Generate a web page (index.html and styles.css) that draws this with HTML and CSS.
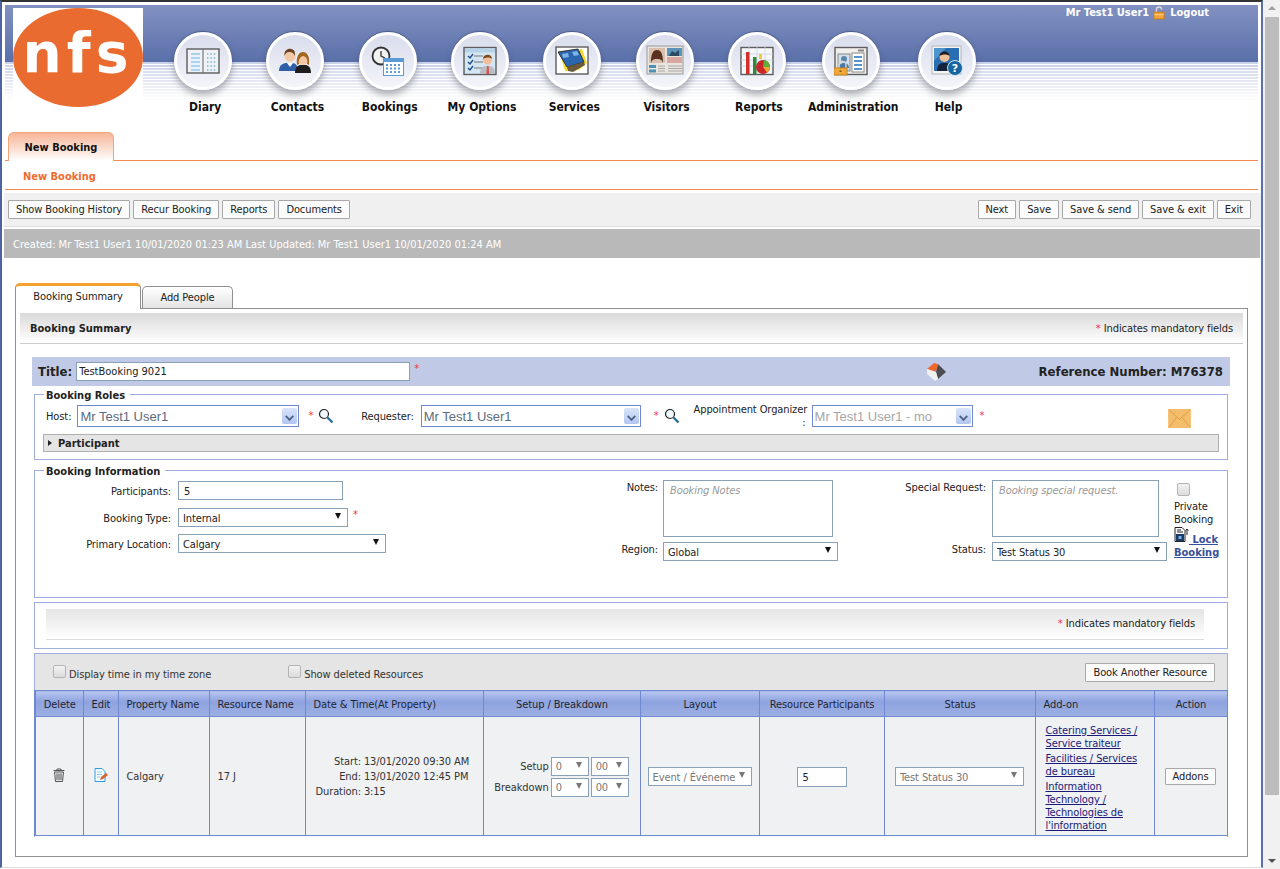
FILE: index.html
```html
<!DOCTYPE html>
<html lang="en">
<head>
    <meta charset="UTF-8">
    <title>New Booking</title>
    <link rel="stylesheet" href="styles.css">
</head>
<body>
<div class="window">
<div class="frame">

    <header class="banner">
        <div class="logo"><div class="logo-oval">nfs</div></div>
        <div class="banner-right">
            <div class="user-bar">
                <span>Mr Test1 User1</span>
                <svg class="lock-icon" width="12" height="14" viewBox="0 0 14 16"><path d="M4 8V4a3 3 0 0 1 6 0" fill="none" stroke="#d9d9d9" stroke-width="1.6"/><rect x="1" y="7" width="12" height="8" fill="#f2a33a" stroke="#c9781a"/><rect x="1.5" y="9.500" width="11" height="1" fill="#ffd38a"/></svg>
                <a href="#">Logout</a>
            </div>
            <nav class="main-nav">
                <a class="nav-item" href="#">
                    <span class="nav-circle">
                        <svg width="34" height="30" viewBox="0 0 34 30"><rect x="1" y="3" width="32" height="24" fill="#eef2f6" stroke="#5c5c5c" stroke-width="1.4"/><rect x="16.4" y="3" width="1.2" height="24" fill="#777"/><path d="M5 8h9M5 12h9M5 16h9M5 20h9M5 24h9" stroke="#63b5e6" stroke-width="1"/><path d="M21 8h9M21 12h9M21 16h9M21 20h9M21 24h9" stroke="#3f8fc4" stroke-width="1.2" stroke-dasharray="1.4 2"/></svg>
                    </span>
                    <span class="nav-label">Diary</span>
                </a>
                <a class="nav-item" href="#">
                    <span class="nav-circle">
                        <svg width="34" height="30" viewBox="0 0 34 30"><path d="M1 25c0-6 4-8 8-8h5c4 0 6 3 6 8z" fill="#2f5fa8"/><path d="M9 17l3 4 3-4z" fill="#fff"/><circle cx="12" cy="10" r="5.5" fill="#f3c9a5"/><path d="M6.500 10c-1-6 4-8 7-7s4 3 3 7c-1-3-2-4-5-4s-4 1-5 4z" fill="#6b4320"/><path d="M17 27c0-6 3-8 6-8h4c3 0 6 2 6 8z" fill="#1d1d1d"/><circle cx="25" cy="14" r="5" fill="#f3c9a5"/><path d="M19 19c-1-9 2-13 6-13s7 4 6 13l-2-1c1-4 0-7-4-8-3 1-5 4-4 8z" fill="#a3661d"/></svg>
                    </span>
                    <span class="nav-label">Contacts</span>
                </a>
                <a class="nav-item" href="#">
                    <span class="nav-circle">
                        <svg width="34" height="30" viewBox="0 0 34 30"><circle cx="10" cy="10" r="8.500" fill="#f2f2f2" stroke="#333" stroke-width="1.800"/><path d="M10 5v5l4 2" fill="none" stroke="#333" stroke-width="1.300"/><rect x="12.500" y="12.500" width="20" height="17" fill="#fff" stroke="#5b9bd5"/><rect x="12.500" y="12.500" width="20" height="3.500" fill="#5b9bd5"/><path d="M15 19h16M15 22.500h16M15 26h16" stroke="#5b9bd5" stroke-width="2" stroke-dasharray="2 2"/></svg>
                    </span>
                    <span class="nav-label">Bookings</span>
                </a>
                <a class="nav-item" href="#">
                    <span class="nav-circle">
                        <svg width="34" height="30" viewBox="0 0 34 30"><rect x="1" y="1.500" width="32" height="27" fill="#d5e6f3" stroke="#5c5c5c" stroke-width="1.400"/><rect x="2" y="2.500" width="30" height="4" fill="#b7d3e8"/><path d="M11 10h9M11 16h9M11 22h9" stroke="#777"/><path d="M5 10l2 2 3-4M5 16l2 2 3-4M5 22l2 2 3-4" fill="none" stroke="#1f4f8a" stroke-width="1.400"/><path d="M17 28c0-6 3-8 6-8h3c3 0 6 2 6 8z" fill="#b9bcc2"/><path d="M24 20h1.600l.6 8h-2.800z" fill="#d9524f"/><circle cx="24.500" cy="14" r="4.500" fill="#f1c09a"/><path d="M20 13c0-5 9-6 9 0-2-2-6-2-9 0z" fill="#7a4a20"/></svg>
                    </span>
                    <span class="nav-label">My Options</span>
                </a>
                <a class="nav-item" href="#">
                    <span class="nav-circle">
                        <svg width="34" height="30" viewBox="0 0 34 30"><rect x="1" y="1" width="32" height="27" fill="#fff" stroke="#5c5c5c" stroke-width="1.400"/><path d="M5 8l22-5 5 14-8 7-14 1z" fill="#f2da2e"/><path d="M3 6l20-3 6 13-17 5z" fill="#2a66b0" stroke="#333"/><path d="M7 8l6-1 1 4-6 1zM17 6l5-1 2 4-5 1z" fill="#7fb2e6"/><path d="M12 21l17-5 1 3-12 7-5-1z" fill="#6a5a3c"/></svg>
                    </span>
                    <span class="nav-label">Services</span>
                </a>
                <a class="nav-item" href="#">
                    <span class="nav-circle">
                        <svg width="38" height="32" viewBox="0 0 38 32"><rect x="1" y="1" width="36" height="28" fill="#e9e5de" stroke="#999"/><rect x="3" y="3" width="16" height="15" fill="#d8bfae"/><circle cx="11" cy="9" r="3.500" fill="#d7a27f"/><path d="M5 18c0-7 1-13 6-13s6 6 6 13c-1-3-2-4-6-4s-5 1-6 4z" fill="#5a3020"/><rect x="21" y="3" width="15" height="8" fill="#5c93b8"/><path d="M23 11l3-5 3 2 4-3v6z" fill="#2c4a5f"/><rect x="21" y="12" width="15" height="6" fill="#d8a8a0"/><rect x="3" y="20" width="7" height="3" fill="#4e93b5"/><rect x="3" y="24.500" width="7" height="3" fill="#4e93b5"/><path d="M12 21h7M12 23.500h7M12 26h7M22 21h14M22 23.500h14M22 26h14" stroke="#a8a8a8"/></svg>
                    </span>
                    <span class="nav-label">Visitors</span>
                </a>
                <a class="nav-item" href="#">
                    <span class="nav-circle">
                        <svg width="34" height="30" viewBox="0 0 34 30"><rect x="1" y="1.500" width="32" height="27" fill="#f6f7f9" stroke="#5c5c5c" stroke-width="1.400"/><path d="M1 8h32M1 14h32M1 20h32M9 1v27M17 1v27M25 1v27" stroke="#c9d3e0" stroke-width=".8"/><rect x="6" y="6" width="3.500" height="22" fill="#d3302b"/><rect x="13" y="11" width="3.500" height="17" fill="#2c8a3c"/><circle cx="23" cy="21" r="7" fill="#c9252b"/><path d="M23 21l1-7a7 7 0 0 1 6 7z" fill="#5fae3a"/><path d="M23 21h7a7 7 0 0 1-3 5.500z" fill="#f0a52c"/><rect x="19" y="8" width="3" height="5" fill="#f2c53a"/></svg>
                    </span>
                    <span class="nav-label">Reports</span>
                </a>
                <a class="nav-item nav-admin" href="#">
                    <span class="nav-circle">
                        <svg width="34" height="30" viewBox="0 0 34 30"><rect x="1" y="1.500" width="32" height="27" fill="#f0efec" stroke="#5c5c5c" stroke-width="1.400"/><rect x="24" y="3.500" width="6" height="2" fill="#888"/><rect x="4" y="8" width="12" height="17" fill="#cfe0ee" stroke="#888"/><circle cx="10" cy="13" r="3" fill="#5b87ad"/><path d="M5 22c0-4 3-5 5-5s5 1 5 5z" fill="#4a7aa3"/><rect x="18" y="7" width="12" height="19" fill="#fff" stroke="#888"/><path d="M20 11h8M20 15h8M20 19h8M20 23h8" stroke="#1f72bd" stroke-width="1.300"/><path d="M5 22v-3a3.500 3.500 0 0 1 7 0v3" fill="none" stroke="#d8d8d8" stroke-width="1.400"/><rect x="0" y="22" width="13" height="7" fill="#f0a83a" stroke="#c9821f"/><rect x="5.500" y="24.500" width="2" height="1.500" fill="#8a5510"/></svg>
                    </span>
                    <span class="nav-label">Administration</span>
                </a>
                <a class="nav-item nav-help" href="#">
                    <span class="nav-circle">
                        <svg width="34" height="32" viewBox="0 0 34 32"><rect x="2" y="1" width="29" height="28" fill="#f5f5f5" stroke="#b5b5b5"/><rect x="4" y="3" width="25" height="23" fill="#2a6fb3"/><path d="M4 3h12L4 16z" fill="#4f94cf"/><path d="M7 26c0-6 3-8 6-8h3c3 0 5 2 6 8z" fill="#15243a"/><circle cx="14.500" cy="12" r="5" fill="#eec19a"/><path d="M9.500 11c0-6 10-6 10 0-2-2-7-2-10 0z" fill="#1e1e1e"/><circle cx="25" cy="23" r="7.500" fill="#17659e" stroke="#cfe4f2"/><text class="help-mark" x="25" y="27">?</text></svg>
                    </span>
                    <span class="nav-label">Help</span>
                </a>
            </nav>
        </div>
    </header>

    <div class="page-tabs"><a class="page-tab" href="#">New Booking</a></div>
    <div class="page-title">New Booking</div>

    <div class="toolbar">
        <div class="btn-group">
            <button class="btn">Show Booking History</button>
            <button class="btn">Recur Booking</button>
            <button class="btn">Reports</button>
            <button class="btn">Documents</button>
        </div>
        <div class="btn-group">
            <button class="btn">Next</button>
            <button class="btn">Save</button>
            <button class="btn">Save &amp; send</button>
            <button class="btn">Save &amp; exit</button>
            <button class="btn">Exit</button>
        </div>
    </div>
    <div class="audit-bar">Created: Mr Test1 User1 10/01/2020 01:23 AM Last Updated: Mr Test1 User1 10/01/2020 01:24 AM</div>

    <div class="form-tabs">
        <a class="form-tab active" href="#">Booking Summary</a>
        <a class="form-tab" href="#">Add People</a>
    </div>

    <section class="panel">
        <div class="panel-head">
            <strong>Booking Summary</strong>
            <span><span class="req">*</span> Indicates mandatory fields</span>
        </div>

        <div class="panel-body">
            <div class="title-bar">
                <label class="title-label">Title:</label>
                <input class="title-input" type="text" value="TestBooking 9021">
                <span class="req title-req">*</span>
                <svg class="cube-icon" width="22" height="22" viewBox="0 0 22 22"><path d="M11 11L2 8l7-6 4 1z" fill="#f0682c"/><path d="M13 3l8 8-8 7-2-7z" fill="#4a4c52"/><path d="M2 8l9 3 2 7-3 2-8-7z" fill="#f1f1f1"/></svg>
                <span class="ref-number">Reference Number: M76378</span>
            </div>

            <fieldset class="group roles">
                <legend>Booking Roles</legend>
                <div class="roles-row">
                    <label class="roles-host">Host:</label>
                    <div class="combo combo-host"><input type="text" value="Mr Test1 User1"><span class="combo-btn"></span></div>
                    <span class="req req-host">*</span>
                    <svg class="search-icon" width="16" height="16" viewBox="0 0 16 16"><circle cx="6" cy="6" r="4.500" fill="#eef7fb" stroke="#222" stroke-width="1.200"/><path d="M9.500 9.500l5 5" stroke="#2a6f96" stroke-width="2.400"/></svg>
                    <label class="roles-requester">Requester:</label>
                    <div class="combo combo-req"><input type="text" value="Mr Test1 User1"><span class="combo-btn"></span></div>
                    <span class="req req-second">*</span>
                    <svg class="search-icon" width="16" height="16" viewBox="0 0 16 16"><circle cx="6" cy="6" r="4.500" fill="#eef7fb" stroke="#222" stroke-width="1.200"/><path d="M9.500 9.500l5 5" stroke="#2a6f96" stroke-width="2.400"/></svg>
                    <label class="roles-organizer">Appointment Organizer<br>:</label>
                    <div class="combo combo-org"><input class="muted" type="text" value="Mr Test1 User1 - mo"><span class="combo-btn"></span></div>
                    <span class="req req-org">*</span>
                    <svg class="mail-icon" width="23" height="19" viewBox="0 0 24 20"><rect width="24" height="20" fill="#f4bd6b"/><path d="M1 1l11 10L23 1M1 19l8-10M23 19l-8-10" fill="none" stroke="#dc9c45"/></svg>
                </div>
                <div class="participant-bar"><span class="caret"></span><strong>Participant</strong></div>
            </fieldset>

            <fieldset class="group info">
                <legend>Booking Information</legend>
                <div class="info-grid">
                    <div class="info-col col-main">
                        <div class="field"><label>Participants:</label><input class="text-box box-participants" type="text" value="5"></div>
                        <div class="field field-type"><label>Booking Type:</label><span class="sel sel-type"><select><option>Internal</option></select></span><span class="req">*</span></div>
                        <div class="field"><label>Primary Location:</label><span class="sel sel-location"><select><option>Calgary</option></select></span></div>
                    </div>
                    <div class="info-col col-notes">
                        <div class="field"><label>Notes:</label><textarea class="note-box" placeholder="Booking Notes"></textarea></div>
                        <div class="field"><label>Region:</label><span class="sel sel-region"><select><option>Global</option></select></span></div>
                    </div>
                    <div class="info-col col-special">
                        <div class="field"><label>Special Request:</label><textarea class="note-box note-special" placeholder="Booking special request."></textarea></div>
                        <div class="field"><label>Status:</label><span class="sel sel-status"><select><option>Test Status 30</option></select></span></div>
                    </div>
                    <div class="info-col col-private">
                        <span class="check check-private"></span>
                        <div class="private-label">Private Booking</div>
                        <a class="lock-link" href="#"><svg width="15" height="15" viewBox="0 0 15 15"><path d="M1 .500h7l3 3v11H1z" fill="#fff" stroke="#222"/><path d="M3 3h4M3 5h6" stroke="#222"/><rect x="2" y="7" width="8" height="7" fill="#1c3a66"/><rect x="4.500" y="9" width="3" height="3" fill="#6fb6e8"/><path d="M13 8V2m-1.500 1.500L13 2l1.500 1.500" fill="none" stroke="#222"/></svg> Lock Booking</a>
                    </div>
                </div>
            </fieldset>

            <div class="group-box mandatory-box">
                <div class="mandatory-inner"><span class="req">*</span> Indicates mandatory fields</div>
            </div>

            <div class="group-box resource-box">
                <div class="resource-tools">
                    <label class="check-label label-zone"><span class="check"></span>Display time in my time zone</label>
                    <label class="check-label"><span class="check"></span>Show deleted Resources</label>
                    <button class="btn btn-book">Book Another Resource</button>
                </div>
                <table class="resource-table">
                    <colgroup>
                        <col class="c-delete"><col class="c-edit"><col class="c-property"><col class="c-resource"><col class="c-date"><col class="c-setup"><col class="c-layout"><col class="c-people"><col class="c-status"><col class="c-addon"><col class="c-action">
                    </colgroup>
                    <thead>
                        <tr>
                            <th>Delete</th><th>Edit</th><th class="left">Property Name</th><th class="left">Resource Name</th><th class="left">Date &amp; Time(At Property)</th><th>Setup / Breakdown</th><th>Layout</th><th>Resource Participants</th><th>Status</th><th class="left">Add-on</th><th>Action</th>
                        </tr>
                    </thead>
                    <tbody>
                        <tr>
                            <td class="center"><svg width="14" height="14" viewBox="0 0 14 14"><path d="M1.500 2.500h11M5 2.500V1h4v1.500" fill="none" stroke="#555"/><path d="M2.500 4h9l-1 9.500h-7z" fill="#e8e8e8" stroke="#555"/><path d="M5 5.500v6.500M7 5.500v6.500M9 5.500v6.500" stroke="#555"/></svg></td>
                            <td class="center"><svg width="14" height="14" viewBox="0 0 14 14"><path d="M1 .500h7l3 3v10H1z" fill="#f4fbff" stroke="#2f9fe0"/><path d="M3 4h5M3 6.500h5M3 9h3" stroke="#8ccbef"/><path d="M6 12l1-3 5-4 2 2-5 4z" fill="#d9662c"/></svg></td>
                            <td class="pad">Calgary</td>
                            <td class="pad">17 J</td>
                            <td>
                                <div class="date-grid">
                                    <span>Start:</span><span>13/01/2020 09:30 AM</span>
                                    <span>End:</span><span>13/01/2020 12:45 PM</span>
                                    <span>Duration:</span><span>3:15</span>
                                </div>
                            </td>
                            <td>
                                <div class="setup-grid">
                                    <span>Setup</span><span class="sel sel-time"><select><option>0</option></select></span><span class="sel sel-time"><select><option>00</option></select></span>
                                    <span>Breakdown</span><span class="sel sel-time"><select><option>0</option></select></span><span class="sel sel-time"><select><option>00</option></select></span>
                                </div>
                            </td>
                            <td class="center"><span class="sel sel-layout"><select><option>Event / Événement</option></select></span></td>
                            <td class="center"><input class="text-box box-people" type="text" value="5"></td>
                            <td class="center"><span class="sel sel-row-status"><select><option>Test Status 30</option></select></span></td>
                            <td class="addons">
                                <a href="#">Catering Services / Service traiteur</a>
                                <a href="#">Facilities / Services de bureau</a>
                                <a href="#">Information Technology / Technologies de l'information</a>
                            </td>
                            <td class="center"><button class="btn btn-addons">Addons</button></td>
                        </tr>
                    </tbody>
                </table>
            </div>
        </div>
    </section>

</div>
<div class="scrollbar">
    <span class="arrow-up"></span>
    <div class="thumb"></div>
    <span class="arrow-down"></span>
</div>
</div>
</body>
</html>
```

FILE: styles.css
```css
* {
    box-sizing: border-box;
}
html, body {
    margin: 0;
    height: 100%;
    overflow: hidden;
}
body {
    background-color: #FFFFFF;
    color: #222222;
    font-family: "DejaVu Sans Condensed", "Liberation Sans", sans-serif;
    font-size: 11px;
    letter-spacing: -0.1px;
}
a {
    color: inherit;
}
button, input, select, textarea {
    font-family: inherit;
    font-size: inherit;
    letter-spacing: inherit;
}
.window {
    display: flex;
    height: 869px;
}
.frame {
    width: 1263px;
    height: 868px;
    border-top: 2px solid #333333;
    border-left: 2px solid #4D64A4;
    border-right: 2px solid #5A70AA;
    border-bottom: 1px solid #DDDDDD;
    padding-top: 3px;
    overflow: hidden;
    flex: none;
}

/* banner */
.banner {
    display: flex;
    height: 127px;
    margin: 0 3px;
    background:
        linear-gradient(#8291C1, #5A70AA) top / 100% 57px no-repeat,
        linear-gradient(rgba(255,255,255,0.1), #FFFFFF) 0 57px / 100% 38px no-repeat,
        repeating-linear-gradient(#C3CCE5 0 2px, #FFFFFF 2px 3px) 0 57px / 100% 38px no-repeat;
}
.logo {
    width: 130px;
    height: 99px;
    margin: 3px 0 0 8px;
    background: linear-gradient(#FFFFFF 90%, transparent);
    flex: none;
}
.logo-oval {
    width: 130px;
    height: 99px;
    border-radius: 50%;
    background-color: #E96B30;
    color: #FFFFFF;
    font-family: "DejaVu Sans", sans-serif;
    font-size: 55px;
    font-weight: bold;
    letter-spacing: 5px;
    line-height: 90px;
    text-align: center;
}
.banner-right {
    flex: 1;
}
.user-bar {
    display: flex;
    justify-content: flex-end;
    align-items: center;
    gap: 4px;
    height: 27px;
    padding: 0 49px 12px 0;
    color: #FFFFFF;
    font-weight: bold;
    letter-spacing: 0;
}
.user-bar a {
    margin-left: 1px;
    text-decoration: none;
}
.main-nav {
    display: flex;
    margin-left: 14px;
}
.nav-item {
    display: flex;
    flex-direction: column;
    align-items: center;
    width: 92.3px;
    flex: none;
    text-decoration: none;
    color: #111111;
}
.nav-admin {
    margin-left: 2px;
}
.nav-help {
    margin-left: 3px;
}
.nav-circle {
    display: flex;
    align-items: center;
    justify-content: center;
    width: 58px;
    height: 58px;
    border-radius: 50%;
    border: 3px solid #FFFFFF;
    background: linear-gradient(#D9DDEC, #F4F5FA);
    box-shadow: 0 -1px 1px #4D5B85, 0 5px 7px rgba(60,60,70,0.4);
}
.nav-label {
    margin-top: 9px;
    padding-left: 4px;
    font-size: 12px;
    font-weight: bold;
    letter-spacing: 0;
    line-height: 16px;
    white-space: nowrap;
}
.help-mark {
    fill: #FFFFFF;
    font-family: "DejaVu Sans", sans-serif;
    font-size: 11px;
    font-weight: bold;
    text-anchor: middle;
}

/* page tabs */
.page-tabs {
    display: flex;
    height: 29px;
    margin: 0 3px;
    padding-left: 3px;
    border-bottom: 1px solid #F58A55;
}
.page-tab {
    width: 106px;
    height: 29px;
    border: 1px solid #F3A37C;
    border-bottom: none;
    border-radius: 6px 6px 0 0;
    background: linear-gradient(#F7B597, #FFFFFF);
    font-weight: bold;
    letter-spacing: 0;
    line-height: 29px;
    text-align: center;
    text-decoration: none;
    color: #111111;
}
.page-title {
    height: 29px;
    margin: 0 3px;
    padding: 1px 0 0 18px;
    border-bottom: 1px solid #F58A55;
    color: #F26A2E;
    font-weight: bold;
    letter-spacing: 0;
    line-height: 30px;
}
.toolbar {
    display: flex;
    justify-content: space-between;
    height: 34px;
    margin: 3px 0 0 2px;
    padding: 7px 10px 0 4px;
    background-color: #F0F0F0;
    border-bottom: 1px solid #DDDDDD;
}
.btn-group {
    display: flex;
    gap: 3px;
}
.btn {
    height: 19px;
    padding: 1px 7px 0;
    border: 1px solid #A8A8A8;
    border-radius: 1px;
    background-color: #FBFBFB;
    color: #222222;
    line-height: 16px;
    white-space: nowrap;
}
.audit-bar {
    height: 29px;
    margin: 2px 1px 0 2px;
    padding-left: 9px;
    background-color: #B9B9B9;
    color: #FFFFFF;
    letter-spacing: 0;
    line-height: 31px;
}

/* form tabs */
.form-tabs {
    display: flex;
    align-items: flex-end;
    gap: 1px;
    height: 25px;
    margin: 25px 0 0 13px;
}
.form-tab {
    width: 91px;
    height: 22px;
    border: 1px solid #8F8F8F;
    border-bottom: none;
    border-radius: 5px 5px 0 0;
    background: linear-gradient(#FFFFFF, #E4E4E4);
    line-height: 21px;
    text-align: center;
    text-decoration: none;
    color: #222222;
}
.form-tab.active {
    width: 126px;
    height: 26px;
    margin-bottom: -1px;
    position: relative;
    border-top: 3px solid #F5A12E;
    background: #FFFFFF;
}
.panel {
    height: 549px;
    width: 1233px;
    margin-left: 13px;
    padding: 4px;
    border: 1px solid #8F8F8F;
}
.panel-head {
    display: flex;
    justify-content: space-between;
    align-items: center;
    height: 31px;
    padding: 0 10px;
    background: linear-gradient(#DADADA, #FFFFFF);
    border-bottom: 1px solid #CCCCCC;
}
.panel-head strong {
    letter-spacing: 0;
}
.req {
    color: #F0353A;
}
.panel-body {
    padding: 13px 13px 0 12px;
}
.title-bar {
    display: flex;
    align-items: center;
    height: 29px;
    width: 1198px;
    padding: 0 7px 0 6px;
    background-color: #C0CAE6;
    font-size: 13px;
    font-weight: bold;
    letter-spacing: 0;
}
.title-input {
    width: 334px;
    height: 19px;
    margin-left: 4px;
    padding: 0 2px;
    border: 1px solid #88A0B8;
    font-size: 11px;
    font-weight: normal;
    color: #222222;
}
.title-req {
    margin: -6px 0 0 4px;
    font-size: 11px;
    font-weight: normal;
}
.cube-icon {
    margin-left: 506px;
}
.ref-number {
    margin-left: auto;
}

/* fieldsets */
.group {
    min-width: 0;
    width: 1194px;
    margin: 8px 0 0 2px;
    padding: 0;
    border: 1px solid #9FAEDC;
}
.group legend {
    height: 14px;
    margin-left: 9px;
    padding: 0 5px 0 2px;
    font-weight: bold;
    letter-spacing: 0;
    line-height: 17px;
}
.roles {
    height: 73px;
    margin-top: 1px;
}
.roles-row {
    display: flex;
    align-items: center;
    height: 22px;
    margin-top: 4px;
    padding-left: 11px;
}
.roles-requester {
    margin-left: 27px;
    margin-right: 7px;
}
.roles-host {
    margin-right: 6px;
}
.roles-organizer {
    width: 112px;
    margin-left: 14px;
    margin-right: 6px;
    text-align: right;
    line-height: 13px;
    white-space: nowrap;
}
.combo {
    position: relative;
    height: 22px;
    border: 1px solid #6F88CF;
    background-color: #FFFFFF;
    flex: none;
}
.combo input {
    width: calc(100% - 18px);
    height: 20px;
    padding: 0 0 0 2px;
    border: none;
    outline: none;
    font-family: "Liberation Sans", sans-serif;
    font-size: 13px;
    letter-spacing: 0;
    color: #5B6C80;
}
.combo input.muted {
    width: 119px;
    color: #A6A6A6;
}
.combo-btn {
    position: absolute;
    top: 2px;
    right: 1px;
    width: 15px;
    height: 16px;
    border-radius: 2px;
    background: linear-gradient(#D9E4FA, #B2C6F1);
}
.combo-btn::after {
    content: "";
    position: absolute;
    left: 4px;
    top: 5px;
    width: 5px;
    height: 5px;
    border-right: 2px solid #4D6185;
    border-bottom: 2px solid #4D6185;
    transform: rotate(45deg) scale(0.9);
}
.combo-host {
    width: 222px;
}
.combo-req {
    width: 220px;
}
.combo-org {
    width: 161px;
}
.req-host {
    margin: -2px 5px 0 9px;
}
.req-second {
    margin: -2px 5px 0 13px;
}
.search-icon {
    flex: none;
}
.req-org {
    margin: -2px 0 0 7px;
}
.mail-icon {
    margin-left: 184px;
    margin-top: 4px;
}
.participant-bar {
    display: flex;
    align-items: center;
    height: 18px;
    width: 1176px;
    margin: 7px 0 0 8px;
    padding-left: 4px;
    background-color: #E5E5E5;
    border: 1px solid #B0B0B0;
}
.participant-bar strong {
    letter-spacing: 0;
}
.caret {
    width: 0;
    height: 0;
    margin-right: 6px;
    border-left: 4px solid #222222;
    border-top: 3.5px solid transparent;
    border-bottom: 3.5px solid transparent;
}
.info {
    height: 135px;
    margin-top: 3px;
}
.info-grid {
    display: flex;
    padding-top: 3px;
}
.info-col {
    flex: none;
}
.field {
    display: flex;
    align-items: flex-start;
}
.col-main {
    width: 585px;
    padding-top: 1px;
}
.col-main .field {
    margin-bottom: 8px;
}
.col-main .field:nth-child(2) {
    margin-bottom: 7px;
}
.col-main label {
    width: 136px;
    height: 19px;
    margin-right: 7px;
    text-align: right;
    line-height: 21px;
}
.field-type .req {
    margin-left: 5px;
    line-height: 14px;
}
.col-notes {
    width: 285px;
}
.col-notes label {
    width: 38px;
    margin-right: 5px;
    text-align: right;
    line-height: 15px;
}
.col-special {
    width: 264px;
}
.col-special label {
    width: 81px;
    margin-right: 6px;
    text-align: right;
    line-height: 15px;
    white-space: nowrap;
}
.note-box {
    display: block;
    width: 170px;
    height: 57px;
    margin-bottom: 5px;
    padding: 3px 6px;
    border: 1px solid #88A0B8;
    resize: none;
    outline: none;
}
.note-special {
    width: 167px;
}
.note-box::placeholder {
    color: #999999;
    font-style: italic;
    opacity: 1;
}
.col-private {
    width: 50px;
    padding: 3px 0 0 0;
    margin-left: 5px;
    line-height: 13px;
}
.check {
    display: inline-block;
    width: 13px;
    height: 13px;
    border: 1px solid #B4B4B4;
    border-radius: 2px;
    background: linear-gradient(#F2F2F2, #DCDCDC);
}
.check-private {
    display: block;
    margin-left: 3px;
}
.private-label {
    margin-top: 4px;
}
.lock-link {
    display: block;
    margin-top: 1px;
    color: #3A4F9A;
    font-weight: bold;
    letter-spacing: 0;
}
.lock-link svg {
    vertical-align: 1px;
}
.text-box {
    height: 19px;
    padding: 1px 5px 0;
    border: 1px solid #88A0B8;
    outline: none;
    color: #222222;
}
.box-participants {
    width: 165px;
}
.sel {
    display: inline-block;
    position: relative;
    height: 19px;
}
.sel select {
    display: block;
    width: 100%;
    height: 100%;
    padding: 1px 16px 0 4px;
    border: 1px solid #88A0B8;
    border-radius: 0;
    outline: none;
    background-color: #FFFFFF;
    appearance: none;
    color: #222222;
}
.sel::after {
    content: "";
    position: absolute;
    top: 5px;
    right: 7px;
    border-top: 6px solid #111111;
    border-left: 3.5px solid transparent;
    border-right: 3.5px solid transparent;
}
.sel-type {
    width: 170px;
}
.sel-location {
    width: 208px;
}
.sel-region {
    width: 175px;
}
.sel-status {
    width: 175px;
}

/* mandatory + resources */
.group-box {
    width: 1194px;
    margin-left: 2px;
    border: 1px solid #9FAEDC;
}
.mandatory-box {
    height: 47px;
    margin-top: 4px;
    padding: 6px 0 0 11px;
}
.mandatory-inner {
    width: 1158px;
    height: 31px;
    padding: 8px 9px 0 0;
    background: linear-gradient(#E4E4E4, #FFFFFF);
    border-bottom: 1px solid #DDDDDD;
    text-align: right;
}
.resource-box {
    height: 184px;
    margin-top: 4px;
    border-bottom: none;
}
.resource-tools {
    display: flex;
    align-items: center;
    height: 36px;
    padding: 0 12px 0 18px;
    background-color: #E5E5E5;
}
.check-label {
    display: flex;
    align-items: flex-end;
    gap: 3px;
    padding-top: 2px;
    color: #333333;
}
.check-label .check {
    margin-bottom: 3px;
}
.label-zone {
    margin-right: 77px;
}
.btn-book {
    margin-left: auto;
}
.resource-table {
    width: 1192px;
    margin-left: -1px;
    table-layout: fixed;
    border-collapse: collapse;
    color: #333333;
}
.c-delete { width: 48px; }
.c-edit { width: 35px; }
.c-property { width: 91px; }
.c-resource { width: 96px; }
.c-date { width: 178px; }
.c-setup { width: 157px; }
.c-layout { width: 119px; }
.c-people { width: 125px; }
.c-status { width: 151px; }
.c-addon { width: 119px; }
.c-action { width: 73px; }
.resource-table th {
    height: 26px;
    padding: 1px 0 0 1px;
    border: 1px solid #6F88CF;
    background: linear-gradient(#B8C7F0 0, #8EA3DF 40%, #9DAFE3 100%);
    font-weight: normal;
    color: #1F2530;
}
.resource-table th.left {
    padding-left: 8px;
    text-align: left;
}
.resource-table td {
    height: 119px;
    padding: 1px 0 0;
    border: 1px solid #6F88CF;
    background-color: #F0F1F3;
}
.resource-table td:first-child,
.resource-table th:first-child {
    border-left-width: 2px;
}
.resource-table td.center {
    text-align: center;
}
.resource-table td.pad {
    padding-left: 8px;
}
.date-grid {
    display: grid;
    grid-template-columns: auto auto;
    justify-content: start;
    gap: 0 3px;
    padding-left: 10px;
    line-height: 15px;
}
.date-grid span:nth-child(odd) {
    text-align: right;
}
.setup-grid {
    display: grid;
    grid-template-columns: auto 38px 38px;
    justify-content: center;
    align-items: center;
    gap: 2px;
}
.setup-grid > span:not(.sel) {
    text-align: right;
}
.sel-time select,
.sel-layout select,
.sel-row-status select {
    color: #777777;
}
.sel-time::after,
.sel-layout::after,
.sel-row-status::after {
    border-top-color: #777777;
    top: 5px;
}
.sel-layout {
    width: 104px;
}
.sel-row-status {
    width: 129px;
}
.box-people {
    width: 50px;
    height: 20px;
}
.resource-table td.addons {
    padding: 7px 10px 0;
    vertical-align: top;
    line-height: 13px;
}
.addons a {
    display: block;
    margin-bottom: 2px;
    color: #1A1A78;
}
.btn-addons {
    height: 17px;
    padding: 0 6px;
    line-height: 15px;
}

/* fake browser scrollbar */
.scrollbar {
    position: relative;
    width: 17px;
    height: 869px;
    background-color: #F1F1F1;
    flex: none;
    padding: 17px 1px 0 2px;
}
.thumb {
    height: 778px;
    background-color: #BCBCBC;
}
.arrow-up, .arrow-down {
    position: absolute;
    left: 5px;
    border-left: 4px solid transparent;
    border-right: 4px solid transparent;
}
.arrow-up {
    top: 6px;
    border-bottom: 4px solid #A0A0A0;
}
.arrow-down {
    bottom: 6px;
    border-top: 4px solid #505050;
}
```
